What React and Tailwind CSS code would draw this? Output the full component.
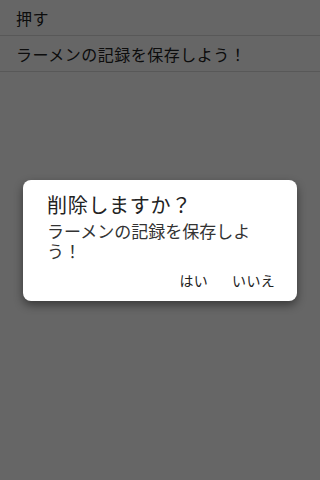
export default function App() {
  const items = ['押す', 'ラーメンの記録を保存しよう！']

  return (
    <div className="relative h-[480px] w-[320px] overflow-hidden bg-white font-['Noto_Sans_CJK_JP',sans-serif] text-[#222]">
      <ul>
        {items.map((t) => (
          <li key={t} className="flex h-[36px] items-center border-b border-[#dcdcdc] px-4 text-[16px] tracking-[0.5px]">
            {t}
          </li>
        ))}
      </ul>

      {/* overlay + dialog */}
      <div className="absolute inset-0 flex items-center justify-center bg-black/60">
        <div className="w-[274px] rounded-lg bg-white pt-[13px] pb-1 shadow-[0_4px_10px_rgba(0,0,0,0.45)]">
          <h2 className="px-6 text-[20px] leading-[24px] tracking-[0.7px] text-[#222]">削除しますか？</h2>
          <p className="mt-1 w-[230px] pl-6 text-[17px] leading-[20px] text-[#333]">
            ラーメンの記録を保存しよう！
          </p>
          <div className="mt-1 flex justify-end pr-[14px]">
            <button className="h-8 px-2 text-[14px] tracking-[0.3px] text-[#222]">はい</button>
            <button className="ml-2 h-8 px-2 text-[14px] tracking-[0.3px] text-[#222]">いいえ</button>
          </div>
        </div>
      </div>
    </div>
  )
}
